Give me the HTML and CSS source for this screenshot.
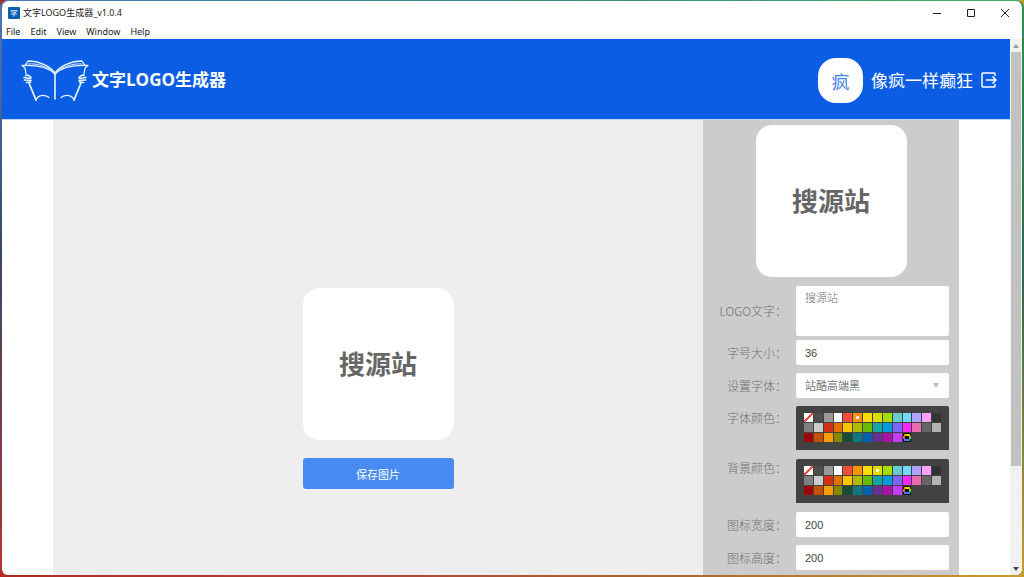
FILE: index.html
```
<!DOCTYPE html>
<html lang="zh-CN">
<head>
<meta charset="utf-8">
<title>文字LOGO生成器_v1.0.4</title>
<meta name="viewport" content="width=device-width, initial-scale=1">
<link rel="stylesheet" href="styles.css">
</head>
<body>
<div class="window">
  <div class="titlebar">
    <svg class="app-icon" viewBox="0 0 12 12" aria-hidden="true">
      <rect width="12" height="12" rx="1" fill="#0b62b4"/>
      <path d="M3 5V3.600h6V5M4 5.200h4L6 6.500V9H5M3 7h6" fill="none" stroke="#d9ecff" stroke-width=".9"/>
    </svg>
    <span class="titlebar-text">文字LOGO生成器_v1.0.4</span>
    <div class="window-controls">
      <button type="button" aria-label="Minimize"><svg viewBox="0 0 8 8"><path d="M0 4.500h8"/></svg></button>
      <button type="button" aria-label="Maximize"><svg viewBox="0 0 8 8"><path d="M.5.500h7v7h-7z"/></svg></button>
      <button type="button" aria-label="Close"><svg viewBox="0 0 8 8"><path d="M0 0l8 8M8 0L0 8"/></svg></button>
    </div>
  </div>
  <nav class="menubar">
    <button type="button">File</button>
    <button type="button">Edit</button>
    <button type="button">View</button>
    <button type="button">Window</button>
    <button type="button">Help</button>
  </nav>
  <div class="viewport">
    <div class="page">
      <header class="header">
        <svg class="brand-icon" viewBox="0 0 68 44" fill="none" stroke="#e6f4ff" stroke-width="1.300" stroke-linecap="round" stroke-linejoin="round" aria-hidden="true">
          <g id="book-half">
            <path d="M34 16C27 9 13 7 1 7.500L4 10L5 16"/>
            <path d="M4 7.500L7 3C18 3 29 8 34 15"/>
            <path d="M7 6C17 5 26 9 32 13" stroke-width=".9"/>
            <path d="M8 25L15 42" stroke-width="1.800"/>
            <path d="M15 42C17 37 23 36 28 39.500"/>
            <path d="M5 17.500C7 16.500 9 18 10 20M3 19.500L9.500 20.500M3.500 22L10 22.500M5.500 24.500L9.500 24" stroke-width="1.700"/>
          </g>
          <use href="#book-half" transform="matrix(-1 0 0 1 68 0)"/>
          <path d="M34 16V41" stroke-width="1.600"/>
        </svg>
        <h1 class="brand-name">文字LOGO生成器</h1>
        <div class="user">
          <span class="avatar">疯</span>
          <span class="user-name">像疯一样癫狂</span>
          <button class="logout" type="button" aria-label="退出">
            <svg viewBox="0 0 16 16"><path d="M14 4V2Q14 1 13 1H2Q1 1 1 2v12Q1 15 2 15h11Q14 15 14 14V12M5 8h10M11.500 4.500L15 8l-3.500 3.500"/></svg>
          </button>
        </div>
      </header>
      <main class="workspace">
        <section class="stage">
          <div class="logo-card">搜源站</div>
          <button class="save" type="button">保存图片</button>
        </section>
        <form class="panel">
          <div class="logo-card">搜源站</div>
          <div class="field field-text">
            <label for="logo-text">LOGO文字：</label>
            <textarea id="logo-text">搜源站</textarea>
          </div>
          <div class="field">
            <label for="font-size">字号大小：</label>
            <input class="control" id="font-size" type="text" value="36">
          </div>
          <div class="field">
            <label class="label-kai" for="font-family">设置字体：</label>
            <div class="select-wrap">
              <select class="control" id="font-family"><option>站酷高端黑</option></select>
              <svg class="caret" viewBox="0 0 6 5" aria-hidden="true"><path d="M0 0h6L3 5z"/></svg>
            </div>
          </div>
          <div class="field field-color">
            <span class="label" id="font-color">字体颜色：</span>
            <div class="palette" role="radiogroup" aria-labelledby="font-color" data-name="font-color" data-value="#fe9200"></div>
          </div>
          <div class="field field-color field-compact">
            <span class="label" id="back-color">背景颜色：</span>
            <div class="palette" role="radiogroup" aria-labelledby="back-color" data-name="back-color" data-value="#dbdf00"></div>
          </div>
          <div class="field">
            <label for="icon-width">图标宽度：</label>
            <input class="control" id="icon-width" type="text" value="200">
          </div>
          <div class="field">
            <label for="icon-height">图标高度：</label>
            <input class="control" id="icon-height" type="text" value="200">
          </div>
        </form>
      </main>
    </div>
    <div class="scrollbar" aria-hidden="true">
      <svg class="arrow-up" viewBox="0 0 6 4"><path d="M0 4h6L3 0z"/></svg>
      <div class="track"><div class="thumb"></div></div>
      <svg class="arrow-down" viewBox="0 0 6 4"><path d="M0 0h6L3 4z"/></svg>
    </div>
  </div>
</div>
<script src="script.js"></script>
</body>
</html>
```
FILE: styles.css
```
* {
  box-sizing: border-box;
}

body {
  margin: 0;
  height: 100vh;
  overflow: hidden;
  background: linear-gradient(90deg, #b02a25, #b3443a 35%, #a8662f 65%, #c99a2e);
  font-family: "Noto Sans CJK SC", sans-serif;
  color: #222;
}

button,
input,
select,
textarea {
  margin: 0;
  padding: 0;
  border: 0;
  background: none;
  color: inherit;
  font: inherit;
}

.window {
  display: flex;
  flex-direction: column;
  height: 100vh;
  border: 2px solid;
  border-width: 1px 2px 2px;
  border-color: transparent;
  border-radius: 8px;
  background:
    linear-gradient(#fff, #fff) padding-box,
    linear-gradient(90deg, #4a78b8, #3b8a86 50%, #3fae62) top / 100% 2px no-repeat border-box,
    linear-gradient(#4a78b8, #39466f 45%, #b8332b) left / 4px 100% no-repeat border-box,
    linear-gradient(#2f8f53, #2c6a48 50%, #c99a2e) right / 4px 100% no-repeat border-box;
  overflow: hidden;
}

.titlebar {
  display: flex;
  align-items: center;
  height: 23px;
  padding: 0 9px 0 6px;
  gap: 3px;
}

.app-icon {
  width: 12px;
  height: 12px;
}

.titlebar-text {
  font-family: "Noto Sans", "Noto Sans CJK SC", sans-serif;
  font-size: 9px;
}

.window-controls {
  display: flex;
  gap: 18px;
  margin-left: auto;
}

.window-controls button {
  display: flex;
  justify-content: center;
  width: 16px;
}

.window-controls svg {
  width: 8px;
  height: 8px;
  fill: none;
  stroke: #222;
}

.menubar {
  display: flex;
  align-items: center;
  gap: 10px;
  height: 15px;
  padding: 1px 4px 0;
  font-family: "Noto Sans", sans-serif;
  font-size: 9px;
  line-height: 12px;
}

.viewport {
  display: flex;
  flex: 1;
  min-height: 0;
}

.page {
  display: flex;
  flex: 1;
  flex-direction: column;
  min-width: 0;
  overflow: hidden;
}

.header {
  display: flex;
  flex-shrink: 0;
  align-items: center;
  height: 81px;
  padding: 2px 13px 0 19px;
  border-bottom: 1px solid #c3d7f8;
  background: #0b5ee4;
  color: #fff;
}

.brand-icon {
  width: 68px;
  height: 44px;
}

.brand-name {
  margin: 0 0 0 3px;
  font: 700 17px/24px "Open Sans", "Noto Sans CJK SC", sans-serif;
}

.user {
  display: flex;
  align-items: center;
  gap: 8px;
  margin-left: auto;
}

.avatar {
  width: 45px;
  height: 45px;
  border-radius: 18px;
  background: #fff;
  color: #3f82e8;
  font-size: 18px;
  line-height: 46px;
  text-align: center;
}

.user-name {
  font-size: 17px;
  line-height: 24px;
}

.logout {
  display: flex;
}

.logout svg {
  width: 16px;
  height: 16px;
  fill: none;
  stroke: #fff;
  stroke-width: 1.5;
}

.workspace {
  display: flex;
  flex: 1;
  min-height: 0;
  padding: 0 51px;
}

.stage {
  display: flex;
  flex: 1;
  flex-direction: column;
  align-items: center;
  gap: 18px;
  padding-top: 168px;
  background: #eee;
}

.logo-card {
  display: flex;
  align-items: center;
  justify-content: center;
  width: 151px;
  height: 152px;
  padding-bottom: 3px;
  border-radius: 16px;
  background: #fff;
  color: #666;
  font-size: 26px;
  font-weight: 700;
}

.save {
  width: 151px;
  height: 31px;
  border-radius: 3px;
  background: #488bf0;
  color: #fff;
  font-size: 11px;
}

.panel {
  display: flex;
  flex-direction: column;
  gap: 8px;
  width: 256px;
  padding: 5px 10px 0 16px;
  background: #ccc;
}

.panel .logo-card {
  flex-shrink: 0;
  align-self: center;
  margin-right: 6px;
}

.field {
  display: grid;
  flex-shrink: 0;
  grid-template-columns: 68px 1fr;
  align-items: center;
  column-gap: 9px;
  color: #707070;
  font-size: 12px;
  font-weight: 300;
  line-height: 18px;
}

.field label,
.label {
  text-align: right;
  white-space: nowrap;
}

.field .label-kai {
  font-family: "AR PL UKai CN", "KaiTi", "Noto Sans CJK SC", serif;
}

.field textarea {
  display: block;
  width: 100%;
  height: 50px;
  padding: 3px 9px;
  border-radius: 2px;
  background: #fff;
  font-size: 11px;
  line-height: 16px;
  resize: none;
}

.field-text {
  margin: 1px 0 -4px;
}

.control {
  display: block;
  width: 100%;
  height: 25px;
  padding: 0 9px;
  border-radius: 2px;
  background: #fff;
  color: #444;
  font-family: "Liberation Sans", "Noto Sans CJK SC", sans-serif;
  font-size: 11px;
  font-weight: 400;
}

.select-wrap {
  position: relative;
}

.select-wrap .control {
  color: #777;
  appearance: none;
}

.caret {
  position: absolute;
  top: 10px;
  right: 10px;
  width: 6px;
  height: 5px;
  fill: #bbb;
}

.field-color {
  align-items: start;
  margin-bottom: 1px;
  line-height: 24px;
}

.field-compact {
  line-height: 18px;
}

.palette {
  display: grid;
  grid-template-columns: repeat(14, 1fr);
  align-content: start;
  gap: 1px;
  height: 44px;
  padding: 7px 8px;
  border-radius: 2px 2px 0 0;
  background: #424242;
}

.swatch {
  display: grid;
  place-items: center;
  width: 100%;
  aspect-ratio: 1;
  appearance: none;
}

.swatch:checked::after {
  content: "";
  width: 3px;
  height: 3px;
  border-radius: 1px;
  background: #fff;
}

.swatch-none {
  background: linear-gradient(135deg, #fff 44%, #ef5048 44% 56%, #fff 56%);
}

.swatch-wheel {
  background:
    radial-gradient(circle, #111 0 2px, transparent 2px 4px, #111 4px),
    conic-gradient(#fcdc00, #a4dd00, #009ce0, #7b64ff, #f44e3b, #fcdc00);
}

.scrollbar {
  display: flex;
  flex-direction: column;
  align-items: center;
  width: 12px;
  padding: 5px 0 4px;
  background: #f1f1f1;
}

.scrollbar svg {
  width: 6px;
  height: 4px;
  fill: #444;
}

.scrollbar .arrow-up {
  fill: #999;
}

.track {
  flex: 1;
  width: 10px;
  margin: 4px 0;
}

.thumb {
  height: 81%;
  background: #c1c1c1;
}
```
FILE: script.js
```
const colors = [
  "none", "#4d4d4d", "#999999", "#ffffff", "#f44e3b", "#fe9200", "#fcdc00",
  "#dbdf00", "#a4dd00", "#68ccca", "#73d8ff", "#aea1ff", "#fda1ff", "#333333",
  "#808080", "#cccccc", "#d33115", "#e27300", "#fcc400", "#b0bc00", "#68bc00",
  "#16a5a5", "#009ce0", "#7b64ff", "#fa28ff", "#e96cb0", "#666666", "#b3b3b3",
  "#9f0500", "#c45100", "#fb9e00", "#808900", "#194d33", "#0c797d", "#0062b1",
  "#653294", "#ab149e", "#c03cff", "wheel"
];

for (const palette of document.querySelectorAll(".palette")) {
  for (const color of colors) {
    const swatch = document.createElement("input");
    swatch.type = "radio";
    swatch.name = palette.dataset.name;
    swatch.value = color;
    swatch.className = "swatch";
    swatch.setAttribute("aria-label", color);
    if (color.startsWith("#")) {
      swatch.style.backgroundColor = color;
    } else {
      swatch.classList.add("swatch-" + color);
    }
    swatch.checked = color === palette.dataset.value;
    palette.append(swatch);
  }
}
```
